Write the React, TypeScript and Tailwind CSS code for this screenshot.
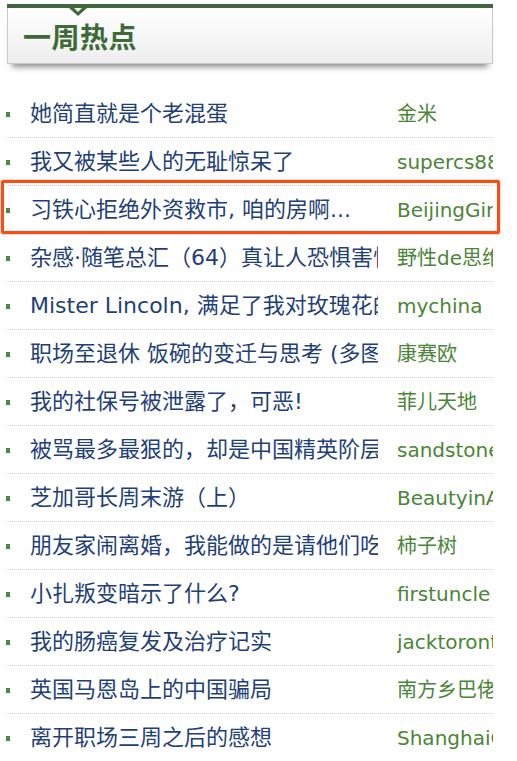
import React from "react";

type Item = { title: string; author: string; hot?: boolean };

const items: Item[] = [
  { title: "她简直就是个老混蛋", author: "金米" },
  { title: "我又被某些人的无耻惊呆了", author: "supercs88" },
  { title: "习铁心拒绝外资救市, 咱的房啊...", author: "BeijingGirl", hot: true },
  { title: "杂感·随笔总汇（64）真让人恐惧害怕", author: "野性de思维" },
  { title: "Mister Lincoln, 满足了我对玫瑰花的幻想", author: "mychina" },
  { title: "职场至退休 饭碗的变迁与思考 (多图)", author: "康赛欧" },
  { title: "我的社保号被泄露了，可恶!", author: "菲儿天地" },
  { title: "被骂最多最狠的，却是中国精英阶层", author: "sandstone" },
  { title: "芝加哥长周末游（上）", author: "BeautyinAmerica" },
  { title: "朋友家闹离婚，我能做的是请他们吃饭", author: "柿子树" },
  { title: "小扎叛变暗示了什么?", author: "firstuncle" },
  { title: "我的肠癌复发及治疗记实", author: "jacktoronto" },
  { title: "英国马恩岛上的中国骗局", author: "南方乡巴佬" },
  { title: "离开职场三周之后的感想", author: "ShanghaiGirl" },
];

// 헤더 박스
const Header = () => (
  <div className="relative ml-[7px] w-[486px] pt-[4px]">
    <div className="h-[4px] bg-[#41683d]" />
    <svg
      className="absolute left-[62px] top-[8px]"
      width="18"
      height="9"
      viewBox="0 0 18 9"
    >
      <polygon points="0,0 18,0 9,8" fill="#41683d" />
      <polygon points="5,0 13,0 9,4" fill="#f6f6f6" />
    </svg>
    <div className="flex h-[56px] items-center border-x border-b border-[#c9c9c9] bg-gradient-to-b from-white to-[#eeeeee] pl-[15px] shadow-[0_8px_6px_-5px_rgba(0,0,0,0.45)]">
      <h2 className="text-[28px] font-bold leading-none tracking-[0.5px] text-[#3d6a37] font-['Noto_Sans_CJK_SC',sans-serif]">
        一周热点
      </h2>
    </div>
  </div>
);

export default function App() {
  return (
    <div className="h-[761px] w-[517px] overflow-hidden bg-white font-['DejaVu_Sans','Noto_Sans_CJK_SC',sans-serif]">
      <Header />
      <ul className="ml-[6px] mt-[26px] w-[487px]">
        {items.map((it, i) => (
          <li
            key={i}
            className="relative flex h-[48px] items-center border-b border-dotted border-[#cfcfcf]"
          >
            <span className="mt-[2px] h-[5px] w-[4px] shrink-0 bg-[#4f8a3c]" />
            <span className="ml-[20px] w-[348px] shrink-0 overflow-hidden whitespace-nowrap text-[22px] leading-[30px] text-[#1f3f78]">
              {it.title}
            </span>
            <span className="ml-[19px] min-w-0 flex-1 overflow-hidden whitespace-nowrap text-[20px] leading-[30px] text-[#4b8538]">
              {it.author}
            </span>
            {it.hot && (
              <div className="pointer-events-none absolute -bottom-[1px] -left-[5px] -right-[7px] -top-[6px] rounded-[2px] border-[3px] border-[#ff4a12] shadow-[0_0_2px_rgba(255,80,20,0.6)]" />
            )}
          </li>
        ))}
      </ul>
    </div>
  );
}
